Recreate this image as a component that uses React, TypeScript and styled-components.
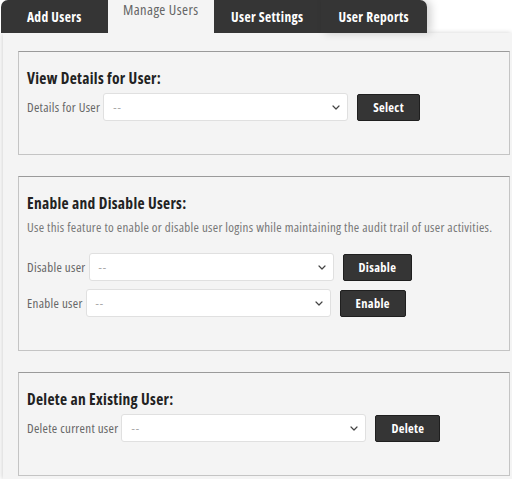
import React from 'react';
import styled, { createGlobalStyle } from 'styled-components';

const FONT = `"Open Sans", "Roboto", "Liberation Sans", sans-serif`;

const GlobalStyle = createGlobalStyle`
  html, body {
    margin: 0;
    padding: 0;
    background: #ffffff;
    font-family: ${FONT};
    font-stretch: 75%;
  }
  * { box-sizing: border-box; }
`;

const Chevron = () => (
  <svg width="8" height="5" viewBox="0 0 8 5" fill="none">
    <path d="M1 1l3 3 3-3" stroke="#444" strokeWidth="1.2" strokeLinecap="round" strokeLinejoin="round" />
  </svg>
);

type Row = { label: string; action: string };

type SectionProps = {
  title: string;
  description?: string;
  rows: Row[];
};

const Section = ({ title, description, rows }: SectionProps) => (
  <Box>
    <Title>{title}</Title>
    {description && <Description>{description}</Description>}
    <Rows $spaced={!!description}>
      {rows.map((row) => (
        <FieldRow key={row.label}>
          <Label>{row.label}</Label>
          <Select>
            <span>--</span>
            <Chevron />
          </Select>
          <ActionButton type="button">{row.action}</ActionButton>
        </FieldRow>
      ))}
    </Rows>
  </Box>
);

const tabs = ['Add Users', 'Manage Users', 'User Settings', 'User Reports'];

export default function App() {
  return (
    <>
      <GlobalStyle />
      <Page>
        <TabBar>
          {tabs.map((tab, i) => (
            <Tab key={tab} $active={tab === 'Manage Users'} $first={i === 0} $last={i === tabs.length - 1}>
              {tab}
            </Tab>
          ))}
        </TabBar>
        <Panel>
          <Section title="View Details for User:" rows={[{ label: 'Details for User', action: 'Select' }]} />
          <Section
            title="Enable and Disable Users:"
            description="Use this feature to enable or disable user logins while maintaining the audit trail of user activities."
            rows={[
              { label: 'Disable user', action: 'Disable' },
              { label: 'Enable user', action: 'Enable' },
            ]}
          />
          <Section title="Delete an Existing User:" rows={[{ label: 'Delete current user', action: 'Delete' }]} />
        </Panel>
      </Page>
    </>
  );
}

const Page = styled.div`
  width: 512px;
  height: 479px;
  overflow: hidden;
  display: flex;
  flex-direction: column;
`;

const TabBar = styled.div`
  display: flex;
  height: 33px;
  margin-left: 1px;
  position: relative;
  z-index: 1;
`;

const Tab = styled.div<{ $active: boolean; $first: boolean; $last: boolean }>`
  flex: 0 0 106.5px;
  height: 33px;
  display: flex;
  justify-content: center;
  align-items: ${(p) => (p.$active ? 'flex-start' : 'center')};
  padding-top: ${(p) => (p.$active ? '0' : '0')};
  background: ${(p) => (p.$active ? '#f4f4f4' : '#353535')};
  color: ${(p) => (p.$active ? '#666666' : '#ffffff')};
  font-size: ${(p) => (p.$active ? '14.5px' : '13.5px')};
  letter-spacing: ${(p) => (p.$active ? '0.4px' : '0.35px')};
  font-weight: ${(p) => (p.$active ? 400 : 700)};
  border-top-left-radius: ${(p) => (p.$first ? '7px' : '0')};
  border-top-right-radius: ${(p) => (p.$last ? '7px' : '0')};
  box-shadow: ${(p) => (p.$last ? '4px 0 8px rgba(0, 0, 0, 0.18)' : 'none')};
`;

const Panel = styled.div`
  flex: 1;
  margin-left: 3px;
  background: #f4f4f4;
  box-shadow: -1px 0 5px rgba(0, 0, 0, 0.18);
  padding: 18px 2px 0 15px;
  display: flex;
  flex-direction: column;
  gap: 21px;
  position: relative;
`;

const Box = styled.div`
  border: 1px solid #c4c4c4;
  border-top-color: #9a9a9a;
  padding: 17px 8px 33px 8px;
  display: flex;
  flex-direction: column;
`;

const Title = styled.h3`
  margin: 0;
  font-size: 15.5px;
  letter-spacing: 0.3px;
  line-height: 18px;
  font-weight: 700;
  color: #222222;
`;

const Description = styled.p`
  margin: 6px 0 0;
  font-size: 13px;
  letter-spacing: 0.3px;
  line-height: 18px;
  color: #777777;
`;

const Rows = styled.div<{ $spaced: boolean }>`
  display: flex;
  flex-direction: column;
  gap: 8px;
  margin-top: ${(p) => (p.$spaced ? '17px' : '6px')};
`;

const FieldRow = styled.div`
  display: flex;
  align-items: center;
`;

const Label = styled.span`
  font-size: 13px;
  letter-spacing: 0.3px;
  color: #666666;
  margin-right: 3px;
`;

const Select = styled.div`
  width: 245px;
  height: 28px;
  background: #ffffff;
  border: 1px solid #e0e0e0;
  border-radius: 3px;
  display: flex;
  align-items: center;
  justify-content: space-between;
  padding: 0 7px 0 9px;
  color: #aaaaaa;
  font-size: 12px;
  letter-spacing: 1px;
`;

const ActionButton = styled.button`
  margin-left: 9px;
  height: 27px;
  padding: 0 15px;
  background: #353535;
  border: 1px solid #1f1f1f;
  border-radius: 2px;
  color: #ffffff;
  font-family: ${FONT};
  font-stretch: 75%;
  font-size: 12.5px;
  letter-spacing: 0.3px;
  font-weight: 700;
  cursor: pointer;
`;
